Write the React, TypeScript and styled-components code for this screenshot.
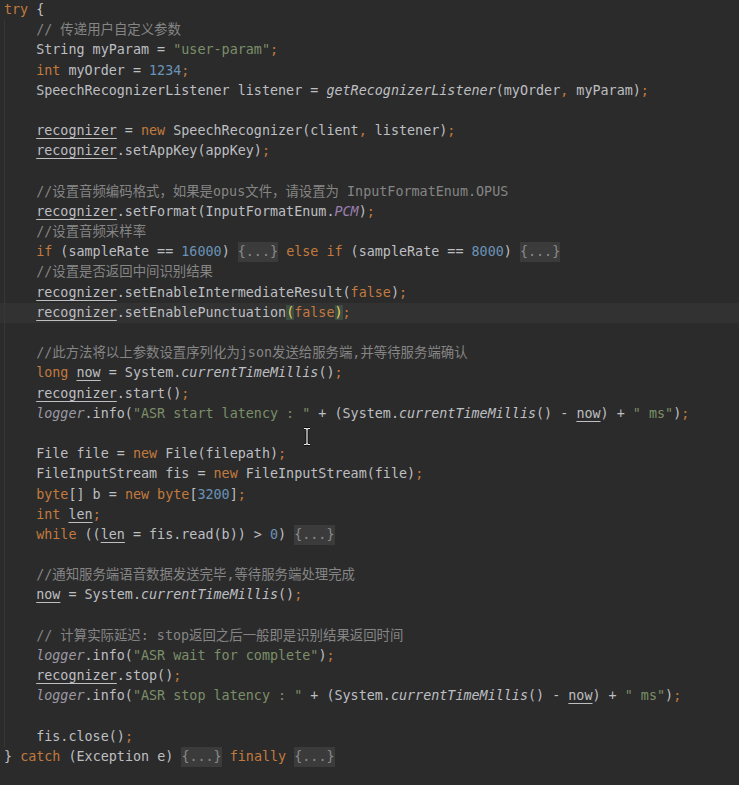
import styled, { createGlobalStyle } from "styled-components";

type Kind = "p" | "k" | "s" | "n" | "c" | "i" | "f" | "u" | "l" | "fold" | "b";
type Seg = [Kind, string];

interface CodeLine {
  indent: number;
  segs: Seg[];
  current?: boolean;
}

const L = (indent: number, ...segs: Seg[]): CodeLine => ({ indent, segs });

const LINES: CodeLine[] = [
  L(0, ["k", "try"], ["p", " {"]),
  L(1, ["c", "// 传递用户自定义参数"]),
  L(1, ["p", "String myParam = "], ["s", '"user-param"'], ["k", ";"]),
  L(1, ["k", "int"], ["p", " myOrder = "], ["n", "1234"], ["k", ";"]),
  L(
    1,
    ["p", "SpeechRecognizerListener listener = "],
    ["i", "getRecognizerListener"],
    ["p", "(myOrder"],
    ["k", ","],
    ["p", " myParam)"],
    ["k", ";"]
  ),
  L(1),
  L(
    1,
    ["u", "recognizer"],
    ["p", " = "],
    ["k", "new"],
    ["p", " SpeechRecognizer(client"],
    ["k", ","],
    ["p", " listener)"],
    ["k", ";"]
  ),
  L(1, ["u", "recognizer"], ["p", ".setAppKey(appKey)"], ["k", ";"]),
  L(1),
  L(1, ["c", "//设置音频编码格式，如果是opus文件，请设置为 InputFormatEnum.OPUS"]),
  L(1, ["u", "recognizer"], ["p", ".setFormat(InputFormatEnum."], ["f", "PCM"], ["p", ")"], ["k", ";"]),
  L(1, ["c", "//设置音频采样率"]),
  L(
    1,
    ["k", "if"],
    ["p", " (sampleRate == "],
    ["n", "16000"],
    ["p", ") "],
    ["fold", "{...}"],
    ["p", " "],
    ["k", "else if"],
    ["p", " (sampleRate == "],
    ["n", "8000"],
    ["p", ") "],
    ["fold", "{...}"]
  ),
  L(1, ["c", "//设置是否返回中间识别结果"]),
  L(1, ["u", "recognizer"], ["p", ".setEnableIntermediateResult("], ["k", "false"], ["p", ")"], ["k", ";"]),
  {
    indent: 1,
    current: true,
    segs: [
      ["u", "recognizer"],
      ["p", ".setEnablePunctuation"],
      ["b", "("],
      ["k", "false"],
      ["b", ")"],
      ["k", ";"],
    ],
  },
  L(1),
  L(1, ["c", "//此方法将以上参数设置序列化为json发送给服务端,并等待服务端确认"]),
  L(1, ["k", "long"], ["p", " "], ["u", "now"], ["p", " = System."], ["i", "currentTimeMillis"], ["p", "()"], ["k", ";"]),
  L(1, ["u", "recognizer"], ["p", ".start()"], ["k", ";"]),
  L(
    1,
    ["l", "logger"],
    ["p", ".info("],
    ["s", '"ASR start latency : "'],
    ["p", " + (System."],
    ["i", "currentTimeMillis"],
    ["p", "() - "],
    ["u", "now"],
    ["p", ") + "],
    ["s", '" ms"'],
    ["p", ")"],
    ["k", ";"]
  ),
  L(1),
  L(1, ["p", "File file = "], ["k", "new"], ["p", " File(filepath)"], ["k", ";"]),
  L(1, ["p", "FileInputStream fis = "], ["k", "new"], ["p", " FileInputStream(file)"], ["k", ";"]),
  L(1, ["k", "byte"], ["p", "[] b = "], ["k", "new byte"], ["p", "["], ["n", "3200"], ["p", "]"], ["k", ";"]),
  L(1, ["k", "int"], ["p", " "], ["u", "len"], ["k", ";"]),
  L(
    1,
    ["k", "while"],
    ["p", " (("],
    ["u", "len"],
    ["p", " = fis.read(b)) > "],
    ["n", "0"],
    ["p", ") "],
    ["fold", "{...}"]
  ),
  L(1),
  L(1, ["c", "//通知服务端语音数据发送完毕,等待服务端处理完成"]),
  L(1, ["u", "now"], ["p", " = System."], ["i", "currentTimeMillis"], ["p", "()"], ["k", ";"]),
  L(1),
  L(1, ["c", "// 计算实际延迟: stop返回之后一般即是识别结果返回时间"]),
  L(1, ["l", "logger"], ["p", ".info("], ["s", '"ASR wait for complete"'], ["p", ")"], ["k", ";"]),
  L(1, ["u", "recognizer"], ["p", ".stop()"], ["k", ";"]),
  L(
    1,
    ["l", "logger"],
    ["p", ".info("],
    ["s", '"ASR stop latency : "'],
    ["p", " + (System."],
    ["i", "currentTimeMillis"],
    ["p", "() - "],
    ["u", "now"],
    ["p", ") + "],
    ["s", '" ms"'],
    ["p", ")"],
    ["k", ";"]
  ),
  L(1),
  L(1, ["p", "fis.close()"], ["k", ";"]),
  L(
    0,
    ["p", "} "],
    ["k", "catch"],
    ["p", " (Exception e) "],
    ["fold", "{...}"],
    ["p", " "],
    ["k", "finally"],
    ["p", " "],
    ["fold", "{...}"]
  ),
];

const GlobalStyle = createGlobalStyle`
  html, body {
    margin: 0;
    padding: 0;
    background: #2b2b2b;
  }
`;

const Editor = styled.div`
  position: relative;
  width: 739px;
  height: 785px;
  background: #2b2b2b;
  font-family: "DejaVu Sans Mono", "Noto Sans CJK SC", monospace;
  font-size: 13.4px;
  color: #bdbfc2;
  overflow: hidden;
`;

const Row = styled.div<{ $indent: number; $current?: boolean }>`
  height: 20.2px;
  line-height: 20.2px;
  padding-left: ${(p) => 4 + p.$indent * 32.2}px;
  white-space: pre;
  background-color: ${(p) => (p.$current ? "#323232" : "transparent")};
  background-image: ${(p) =>
    p.$indent > 0
      ? "linear-gradient(to right, transparent 4px, #373737 4px, #373737 5px, transparent 5px)"
      : "none"};
`;

const COLORS: Record<Kind, string> = {
  p: "#bdbfc2",
  k: "#c27a3e",
  s: "#7b8f69",
  n: "#6a93b8",
  c: "#858585",
  i: "#bdbfc2",
  f: "#9a7fae",
  u: "#bdbfc2",
  l: "#9c98a4",
  fold: "#8a8a8a",
  b: "#e3d35a",
};

const Tok = styled.span<{ $kind: Kind }>`
  color: ${(p) => COLORS[p.$kind]};
  font-style: ${(p) =>
    p.$kind === "i" || p.$kind === "f" || p.$kind === "l" ? "italic" : "normal"};
  text-decoration: ${(p) => (p.$kind === "u" ? "underline" : "none")};
  text-underline-offset: 3px;
  background: ${(p) =>
    p.$kind === "fold" ? "#3b3b3b" : p.$kind === "b" ? "#3d4d44" : "transparent"};
  padding: ${(p) => (p.$kind === "fold" ? "2px 0 3px" : "0")};
`;

const Cursor = styled.svg`
  position: absolute;
  left: 302px;
  top: 427px;
`;

const App = () => {
  return (
    <>
      <GlobalStyle />
      <Editor>
        {LINES.map((line, idx) => (
          <Row key={idx} $indent={line.indent} $current={line.current}>
            {line.segs.length === 0
              ? " "
              : line.segs.map(([kind, text], j) => (
                  <Tok key={j} $kind={kind}>
                    {text}
                  </Tok>
                ))}
          </Row>
        ))}
        <Cursor width="10" height="19" viewBox="0 0 10 19">
          <path
            d="M2 1.5h2l1 1 1-1h2M5 2.5v14M2 17.5h2l1-1 1 1h2"
            stroke="#111"
            strokeWidth="3"
            fill="none"
          />
          <path
            d="M2 1.5h2l1 1 1-1h2M5 2.5v14M2 17.5h2l1-1 1 1h2"
            stroke="#f0f0f0"
            strokeWidth="1.2"
            fill="none"
          />
        </Cursor>
      </Editor>
    </>
  );
};

export default App;
